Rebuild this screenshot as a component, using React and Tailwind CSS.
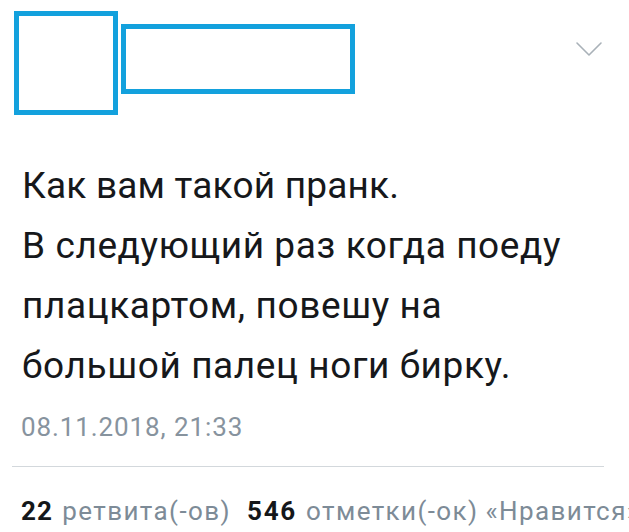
export default function App() {
  return (
    <div className="w-[629px] h-[532px] overflow-hidden bg-white" style={{ fontFamily: "Roboto, 'Noto Sans', sans-serif" }}>
      <div className="flex items-start pl-[14px] pt-[11px] pr-[26px]">
        <div className="w-[104px] h-[104px] border-[5px] border-[#13a1dd] shrink-0" />
        <div className="ml-[3px] mt-[13px] w-[234px] h-[70px] border-[5px] border-[#13a1dd] shrink-0" />
        <div className="ml-auto mt-[30px]">
          <svg width="28" height="16" viewBox="0 0 28 16" fill="none">
            <path d="M2 2 L14 14 L26 2" stroke="#a9b1b8" strokeWidth="1.6" strokeLinecap="round" strokeLinejoin="round" />
          </svg>
        </div>
      </div>
      <div className="pl-[22px] mt-[41px] text-[37px] leading-[60px] text-[#16181b] tracking-[0.6px]">
        <div className="tracking-[0.2px]">Как вам такой пранк.</div>
        <div>В следующий раз когда поеду</div>
        <div>плацкартом, повешу на</div>
        <div>большой палец ноги бирку.</div>
      </div>
      <div className="pl-[21px] mt-[16px] text-[26px] leading-[30px] tracking-[0.9px] text-[#87939e]">08.11.2018, 21:33</div>
      <div className="ml-[12px] w-[592px] mt-[24px] h-px bg-[#d3d8dc]" />
      <div className="flex pl-[21px] mt-[29px] text-[26px] leading-[30px] whitespace-nowrap text-[#7d8b97] tracking-[1.4px]">
        <span className="font-bold text-[#14171a] tracking-[1.2px]">22</span>
        <span className="ml-[9px]">ретвита(-ов)</span>
        <span className="ml-[16px] font-bold text-[#14171a] tracking-[1.8px]">546</span>
        <span className="ml-[9px]">отметки(-ок)</span>
        <span className="ml-[7px]">«Нравится»</span>
      </div>
    </div>
  );
}
